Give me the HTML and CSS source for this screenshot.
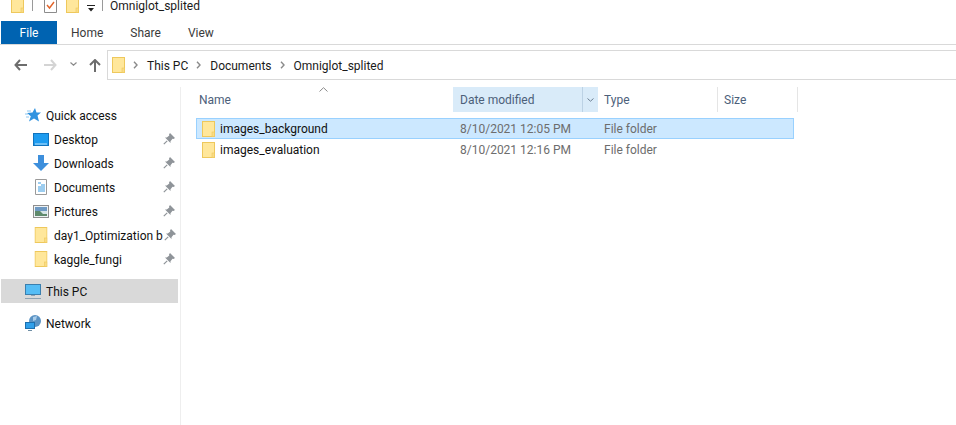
FILE: index.html
```html
<!DOCTYPE html>
<html lang="en">
<head>
    <meta charset="UTF-8">
    <meta name="viewport" content="width=device-width, initial-scale=1.0">
    <title>Omniglot_splited</title>
    <link rel="stylesheet" href="styles.css">
</head>
<body>
    <svg class="defs" width="0" height="0">
        <symbol id="folder" viewBox="0 0 13 16">
            <rect x=".5" y=".5" width="12" height="15" fill="#ffe79b" stroke="#eec85c"/>
            <rect x="10" y="11" width="2.5" height="4.5" fill="#f9dc85" stroke="#eec85c" stroke-width=".6"/>
        </symbol>
        <symbol id="pin" viewBox="0 0 12 12">
            <path d="M7 0 L12 5 L10.5 6 L9.5 5.7 L7.5 8.2 L7.5 10 L2 4.5 L3.8 4.5 L6.3 2.5 L6 1.4 Z" fill="#8f9499"/>
            <path d="M4.2 7.8 L.8 11.2" stroke="#8f9499" stroke-width="1.2" fill="none"/>
        </symbol>
        <symbol id="chev" viewBox="0 0 5 8">
            <path d="M1 .8 L4 4 L1 7.2" stroke="#8a8a8a" stroke-width="1.4" fill="none"/>
        </symbol>
    </svg>

    <div class="titlebar">
        <svg class="tb-folder" width="13" height="16"><use href="#folder"/></svg>
        <span class="tb-sep"></span>
        <svg class="tb-check" width="13" height="16" viewBox="0 0 13 16">
            <path d="M.5 .5 H12.5 V15.5 H.5 Z" fill="#fff" stroke="#8c8c8c"/>
            <path d="M3 8 L5.5 11 L10 5" stroke="#e2642a" stroke-width="1.4" fill="none"/>
        </svg>
        <svg class="tb-folder2" width="13" height="16"><use href="#folder"/></svg>
        <svg class="tb-down" width="8" height="7" viewBox="0 0 8 7">
            <path d="M0 .5 H8" stroke="#222"/>
            <path d="M1 3 H7 L4 6.5 Z" fill="#222"/>
        </svg>
        <span class="tb-sep tb-sep2"></span>
        <span class="tb-title">Omniglot_splited</span>
    </div>

    <div class="tabs">
        <div class="tab tab-file">File</div>
        <div class="tab tab-home">Home</div>
        <div class="tab tab-share">Share</div>
        <div class="tab tab-view">View</div>
    </div>

    <div class="navrow">
        <div class="navbtns">
            <svg class="nav-back" width="13" height="12" viewBox="0 0 13 12">
                <path d="M6 1 L1.5 6 L6 11 M1.5 6 H13" stroke="#6d6d6d" stroke-width="2" fill="none"/>
            </svg>
            <svg class="nav-fwd" width="13" height="12" viewBox="0 0 13 12">
                <path d="M7 1 L11.5 6 L7 11 M11.5 6 H0" stroke="#d4d4d4" stroke-width="2" fill="none"/>
            </svg>
            <svg class="nav-drop" width="7" height="4" viewBox="0 0 7 4">
                <path d="M.5 .5 L3.5 3.2 L6.5 .5" stroke="#8a8a8a" stroke-width="1.2" fill="none"/>
            </svg>
            <svg class="nav-up" width="12" height="13" viewBox="0 0 12 13">
                <path d="M1 6 L6 1 L11 6 M6 1 V13" stroke="#6d6d6d" stroke-width="2" fill="none"/>
            </svg>
        </div>
        <div class="address">
            <svg class="addr-folder" width="13" height="16"><use href="#folder"/></svg>
            <svg class="crumb-chev" width="5" height="8"><use href="#chev"/></svg>
            <span>This PC</span>
            <svg class="crumb-chev" width="5" height="8"><use href="#chev"/></svg>
            <span>Documents</span>
            <svg class="crumb-chev" width="5" height="8"><use href="#chev"/></svg>
            <span>Omniglot_splited</span>
        </div>
    </div>

    <div class="main">
        <nav class="sidebar">
            <div class="item top">
                <svg class="ico" width="16" height="14" viewBox="0 0 16 14">
                    <path d="M10 0 L11.5 4.5 L16 4.5 L12.5 7.5 L14 13.5 L9 10.5 L4 13.5 L5.8 8.3 L2 5 L7.5 4.5 Z" fill="#2f93e0"/>
                    <path d="M2 3 H6 M0 6 H3 M1 9 H4" stroke="#8cc6f0"/>
                </svg>
                <span class="label">Quick access</span>
            </div>
            <div class="item">
                <svg class="ico" width="16" height="13" viewBox="0 0 16 13">
                    <rect x=".5" y=".5" width="15" height="12" fill="#1e9cf0" stroke="#1173bd"/>
                    <path d="M2 11 H14" stroke="#bfe3fa"/>
                </svg>
                <span class="label">Desktop</span>
                <svg class="pin" width="12" height="12"><use href="#pin"/></svg>
            </div>
            <div class="item">
                <svg class="ico" width="16" height="16" viewBox="0 0 16 16">
                    <path d="M5 0 H11 V8 H16 L8 16 L0 8 H5 Z" fill="#3d8fdc"/>
                </svg>
                <span class="label">Downloads</span>
                <svg class="pin" width="12" height="12"><use href="#pin"/></svg>
            </div>
            <div class="item">
                <svg class="ico" width="16" height="16" viewBox="0 0 16 16">
                    <path d="M2.5 .5 H13.5 V15.5 H2.5 Z" fill="#fff" stroke="#9a9a9a"/>
                    <path d="M5 4 H8 M8 6 H12 M5 8 H12 M5 10 H12 M5 12 H12" stroke="#3a9be0"/>
                </svg>
                <span class="label">Documents</span>
                <svg class="pin" width="12" height="12"><use href="#pin"/></svg>
            </div>
            <div class="item">
                <svg class="ico" width="16" height="13" viewBox="0 0 16 13">
                    <rect x=".5" y=".5" width="15" height="12" fill="#eef2f4" stroke="#8e8e8e"/>
                    <rect x="2" y="2" width="12" height="4" fill="#6f9ac4"/>
                    <rect x="2" y="6" width="12" height="5" fill="#5f8a6c"/>
                    <path d="M7 6 H14 V9 H10 Z" fill="#d5e4e6"/>
                </svg>
                <span class="label">Pictures</span>
                <svg class="pin" width="12" height="12"><use href="#pin"/></svg>
            </div>
            <div class="item">
                <svg class="ico" width="16" height="16" viewBox="-1.5 0 16 16"><use href="#folder" width="13" height="16"/></svg>
                <span class="label">day1_Optimization b</span>
                <svg class="pin" width="12" height="12"><use href="#pin"/></svg>
            </div>
            <div class="item">
                <svg class="ico" width="16" height="16" viewBox="-1.5 0 16 16"><use href="#folder" width="13" height="16"/></svg>
                <span class="label">kaggle_fungi</span>
                <svg class="pin" width="12" height="12"><use href="#pin"/></svg>
            </div>
            <div class="item top active group">
                <svg class="ico" width="16" height="15" viewBox="0 0 16 15">
                    <rect x=".5" y=".5" width="15" height="10" fill="#55bdf5" stroke="#3b7fae"/>
                    <path d="M6 11.5 H10 M0 14.5 H16" stroke="#8fa3b2"/>
                </svg>
                <span class="label">This PC</span>
            </div>
            <div class="item top group">
                <svg class="ico" width="16" height="16" viewBox="0 0 16 16">
                    <circle cx="10" cy="6" r="6" fill="#5b93c4"/>
                    <path d="M8 2 L12 1 L11 5 L8 6 Z" fill="#a9cdea"/>
                    <rect x=".5" y="7.5" width="9" height="6" fill="#2f9fea" stroke="#1d6fae"/>
                    <path d="M3 15.5 H7" stroke="#6f8ea5"/>
                </svg>
                <span class="label">Network</span>
            </div>
        </nav>

        <section class="content">
            <div class="header">
                <div class="col col-name">Name
                    <svg class="sort" width="9" height="5" viewBox="0 0 9 5">
                        <path d="M.5 4.5 L4.5 .7 L8.5 4.5" stroke="#8a8a8a" fill="none"/>
                    </svg>
                </div>
                <div class="col col-date">Date modified</div>
                <div class="col col-drop">
                    <svg width="7" height="4" viewBox="0 0 7 4">
                        <path d="M.5 .5 L3.5 3.2 L6.5 .5" stroke="#6d7f92" fill="none"/>
                    </svg>
                </div>
                <div class="col col-type">Type</div>
                <div class="col col-size">Size</div>
            </div>
            <div class="rows">
                <div class="row selected">
                    <div class="cell-name">
                        <svg width="13" height="16"><use href="#folder"/></svg>
                        <span>images_background</span>
                    </div>
                    <div class="cell-date">8/10/2021 12:05 PM</div>
                    <div class="cell-type">File folder</div>
                </div>
                <div class="row">
                    <div class="cell-name">
                        <svg width="13" height="16"><use href="#folder"/></svg>
                        <span>images_evaluation</span>
                    </div>
                    <div class="cell-date">8/10/2021 12:16 PM</div>
                    <div class="cell-type">File folder</div>
                </div>
            </div>
        </section>
    </div>
</body>
</html>
```

FILE: styles.css
```css
html, body {
    height: 100%;
}
body {
    margin: 0;
    background: #ffffff;
    font-family: Roboto, "Noto Sans", Arial, sans-serif;
    font-size: 12px;
    color: #1a1a1a;
    overflow: hidden;
}
svg {
    display: block;
    flex: none;
}
.defs {
    position: absolute;
}

/* title bar, cut off at the top of the shot */
.titlebar {
    height: 21px;
    display: flex;
    align-items: flex-start;
    overflow: hidden;
}
.tb-folder,
.tb-check,
.tb-folder2 {
    margin-top: -3px;
}
.tb-folder {
    margin-left: 11px;
}
.tb-sep {
    width: 1px;
    height: 11px;
    margin-left: 8px;
    background: #9a9a9a;
}
.tb-check {
    margin-left: 11px;
}
.tb-folder2 {
    margin-left: 9px;
}
.tb-down {
    margin: 5px 0 0 8px;
}
.tb-sep2 {
    margin-left: 7px;
}
.tb-title {
    margin-left: 7px;
    line-height: 13px;
}

/* ribbon tabs */
.tabs {
    height: 23px;
    display: flex;
    border-bottom: 1px solid #d9d9d9;
    padding-left: 1px;
}
.tab {
    line-height: 25px;
    height: 23px;
    color: #3b3b3b;
}
.tab-file {
    width: 56px;
    text-align: center;
    background: #0063b1;
    color: #ffffff;
}
.tab-home {
    margin-left: 14px;
}
.tab-share {
    margin-left: 27px;
}
.tab-view {
    margin-left: 27px;
}

/* back / forward / address */
.navrow {
    height: 30px;
    margin-top: 5px;
    display: flex;
}
.navbtns {
    width: 107px;
    display: flex;
    align-items: center;
    padding-left: 14px;
    box-sizing: border-box;
}
.nav-fwd {
    margin-left: 17px;
}
.nav-drop {
    margin: 0 0 2px 13px;
}
.nav-up {
    margin-left: 12px;
}
.address {
    flex: 1;
    display: flex;
    align-items: center;
    padding-left: 4px;
    border: 1px solid #d9d9d9;
    border-right: none;
    color: #1a1a1a;
}
.address span {
    padding-top: 1px;
}
.crumb-chev {
    margin: 0 9px 0 8px;
}

.main {
    display: flex;
}

/* left navigation pane */
.sidebar {
    width: 181px;
    height: 338px;
    margin-top: 7px;
    padding-top: 16px;
    box-sizing: border-box;
    border-right: 1px solid #eeeeee;
    flex: none;
}
.item {
    height: 24px;
    width: 177px;
    margin-left: 1px;
    padding: 0 3px 0 32px;
    box-sizing: border-box;
    display: flex;
    align-items: center;
    gap: 5px;
}
.item.top {
    padding-left: 24px;
}
.item.group {
    margin-top: 8px;
}
.item.active {
    background: #d9d9d9;
}
.label {
    flex: 1;
    padding-top: 1px;
    white-space: nowrap;
    color: #111111;
}
.pin {
    margin-left: -4px;
}

/* file list */
.content {
    flex: 1;
    position: relative;
}
.header {
    margin: 7px 0 0 9px;
    height: 25px;
    display: grid;
    grid-template-columns: 263px 130px 15px 120px 80px;
    width: 608px;
    color: #4c607a;
}
.col {
    height: 25px;
    line-height: 27px;
    position: relative;
    box-sizing: border-box;
    padding-left: 7px;
    border-right: 1px solid #e5e5e5;
}
.col-name {
    padding-left: 9px;
    border-right: none;
}
.col-date {
    background: #d9ebf9;
    border-right: 1px solid #bcd2e5;
}
.col-drop {
    background: #d9ebf9;
    padding: 0;
    display: flex;
    align-items: center;
    justify-content: center;
    border-right: none;
}
.col-type {
    padding-left: 6px;
}
.col-size {
    padding-left: 6px;
}
.sort {
    position: absolute;
    left: 129px;
    top: 0;
}
.rows {
    margin: 6px 0 0 15px;
    width: 598px;
}
.row {
    height: 21px;
    display: grid;
    grid-template-columns: 257px 144px 1fr;
    align-items: center;
    box-sizing: border-box;
    border: 1px solid transparent;
    color: #6d6d6d;
}
.row.selected {
    background: #cce8ff;
    border-color: #99d1ff;
}
.cell-name {
    display: flex;
    align-items: center;
    gap: 5px;
    padding-left: 5px;
    color: #111111;
}
.cell-date {
    padding-left: 6px;
}
.cell-type {
    padding-left: 6px;
}
```
